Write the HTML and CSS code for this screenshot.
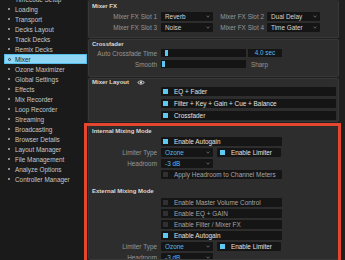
FILE: index.html
```html
<!DOCTYPE html>
<html lang="en">
<head>
    <meta charset="UTF-8">
    <title>Preferences - Mixer</title>
    <link rel="stylesheet" href="styles.css">
</head>
<body>
    <div class="app">
        <div class="sidebar">
            <ul class="nav">
                <li><span class="dot"></span>Timecode Setup</li>
                <li><span class="dot"></span>Loading</li>
                <li><span class="dot"></span>Transport</li>
                <li><span class="dot"></span>Decks Layout</li>
                <li><span class="dot"></span>Track Decks</li>
                <li><span class="dot"></span>Remix Decks</li>
                <li class="active"><span class="dot"></span>Mixer</li>
                <li><span class="dot"></span>Ozone Maximizer</li>
                <li><span class="dot"></span>Global Settings</li>
                <li><span class="dot"></span>Effects</li>
                <li><span class="dot"></span>Mix Recorder</li>
                <li><span class="dot"></span>Loop Recorder</li>
                <li><span class="dot"></span>Streaming</li>
                <li><span class="dot"></span>Broadcasting</li>
                <li><span class="dot"></span>Browser Details</li>
                <li><span class="dot"></span>Layout Manager</li>
                <li><span class="dot"></span>File Management</li>
                <li><span class="dot"></span>Analyze Options</li>
                <li><span class="dot"></span>Controller Manager</li>
            </ul>
        </div>

        <div class="main">
            <div class="panel panel-fx">
                <div class="head">Mixer FX</div>
                <div class="row">
                    <span class="lbl">Mixer FX Slot 1</span>
                    <div class="select">Reverb<svg class="chev" viewBox="0 0 4 3"><polyline points="0.5,0.8 2,2.2 3.5,0.8"/></svg></div>
                    <span class="lbl lbl-2">Mixer FX Slot 2</span>
                    <div class="select select-2">Dual Delay<svg class="chev" viewBox="0 0 4 3"><polyline points="0.5,0.8 2,2.2 3.5,0.8"/></svg></div>
                </div>
                <div class="row">
                    <span class="lbl">Mixer FX Slot 3</span>
                    <div class="select">Noise<svg class="chev" viewBox="0 0 4 3"><polyline points="0.5,0.8 2,2.2 3.5,0.8"/></svg></div>
                    <span class="lbl lbl-2">Mixer FX Slot 4</span>
                    <div class="select select-2">Time Gater<svg class="chev" viewBox="0 0 4 3"><polyline points="0.5,0.8 2,2.2 3.5,0.8"/></svg></div>
                </div>
            </div>

            <div class="panel panel-xf">
                <div class="head">Crossfader</div>
                <div class="row row-a">
                    <span class="lbl">Auto Crossfade Time</span>
                    <div class="track"><span class="handle" style="margin-left: 4px"></span></div>
                    <div class="value">4.0 sec</div>
                </div>
                <div class="row row-b">
                    <span class="lbl">Smooth</span>
                    <div class="track"><span class="handle" style="margin-left: 1px"></span></div>
                    <span class="after">Sharp</span>
                </div>
            </div>

            <div class="panel panel-layout">
                <div class="head">Mixer Layout
                    <svg class="eye" viewBox="0 0 9 6"><path d="M0.5 3 Q4.5 -1 8.5 3 Q4.5 7 0.5 3 Z"/><circle cx="4.5" cy="3" r="1.3"/></svg>
                </div>
                <div class="row row-12">
                    <span class="lbl"></span>
                    <div class="field wide"><span class="box on"></span>EQ + Fader</div>
                </div>
                <div class="row row-12">
                    <span class="lbl"></span>
                    <div class="field wide"><span class="box on"></span>Filter + Key + Gain + Cue + Balance</div>
                </div>
                <div class="row row-12">
                    <span class="lbl"></span>
                    <div class="field wide"><span class="box on"></span>Crossfader</div>
                </div>
            </div>

            <div class="panel panel-mode">
                <div class="head">Internal Mixing Mode</div>
                <div class="row">
                    <span class="lbl"></span>
                    <div class="field"><span class="box on"></span>Enable Autogain</div>
                </div>
                <div class="row">
                    <span class="lbl">Limiter Type</span>
                    <div class="select blue">Ozone<svg class="chev" viewBox="0 0 4 3"><polyline points="0.5,0.8 2,2.2 3.5,0.8"/></svg></div>
                    <div class="field small"><span class="box on"></span>Enable Limiter</div>
                </div>
                <div class="row">
                    <span class="lbl">Headroom</span>
                    <div class="select blue">-3 dB<svg class="chev" viewBox="0 0 4 3"><polyline points="0.5,0.8 2,2.2 3.5,0.8"/></svg></div>
                </div>
                <div class="row">
                    <span class="lbl"></span>
                    <div class="field dim"><span class="box"></span>Apply Headroom to Channel Meters</div>
                </div>

                <div class="head head-ext">External Mixing Mode</div>
                <div class="row">
                    <span class="lbl"></span>
                    <div class="field dim"><span class="box"></span>Enable Master Volume Control</div>
                </div>
                <div class="row">
                    <span class="lbl"></span>
                    <div class="field dim"><span class="box"></span>Enable EQ + GAIN</div>
                </div>
                <div class="row">
                    <span class="lbl"></span>
                    <div class="field dim"><span class="box"></span>Enable Filter / Mixer FX</div>
                </div>
                <div class="row">
                    <span class="lbl"></span>
                    <div class="field"><span class="box on"></span>Enable Autogain</div>
                </div>
                <div class="row">
                    <span class="lbl">Limiter Type</span>
                    <div class="select blue">Ozone<svg class="chev" viewBox="0 0 4 3"><polyline points="0.5,0.8 2,2.2 3.5,0.8"/></svg></div>
                    <div class="field small"><span class="box on"></span>Enable Limiter</div>
                </div>
                <div class="row">
                    <span class="lbl">Headroom</span>
                    <div class="select blue">-3 dB<svg class="chev" viewBox="0 0 4 3"><polyline points="0.5,0.8 2,2.2 3.5,0.8"/></svg></div>
                </div>
            </div>
        </div>

        <div class="callout"></div>
    </div>
</body>
</html>
```

FILE: styles.css
```css
* {
    margin: 0;
    padding: 0;
    box-sizing: border-box;
}

body {
    font-family: "Liberation Sans", Arial, sans-serif;
    font-size: 6.4px;
    background-color: #1e1e1e;
    color: #c8c8c8;
    width: 345px;
    height: 260px;
    overflow: hidden;
}

.app {
    position: relative;
    display: flex;
    height: 260px;
    overflow: hidden;
}

/* sidebar */
.sidebar {
    width: 87px;
    flex: none;
    background-color: #1a1a1a;
    overflow: hidden;
}

.nav {
    list-style: none;
    margin-top: -6px;
}

.nav li {
    display: flex;
    align-items: center;
    gap: 5px;
    height: 10px;
    padding-left: 8px;
    color: #c6c6c6;
    white-space: nowrap;
}

.nav .dot {
    width: 2px;
    height: 2px;
    background-color: #8a8a8a;
    flex: none;
}

.nav li.active {
    margin-left: 4px;
    padding-left: 4px;
    gap: 4px;
    background-color: #8ed6f4;
    box-shadow: inset 0 0 0 1px #55bde9;
    color: #152028;
}

.nav li.active .dot {
    width: 3px;
    height: 3px;
    border-radius: 50%;
    background: none;
    border: 0.8px solid #2a3a44;
}

/* main */
.main {
    flex: 1;
    padding: 0 6px 0 1px;
    background-color: #202020;
    overflow: hidden;
}

.panel {
    background-color: #2d2d2d;
    border: 1px solid #383838;
    border-radius: 2px;
    margin-bottom: 1px;
}

.head {
    display: flex;
    align-items: center;
    gap: 8px;
    height: 10px;
    padding-left: 3px;
    font-weight: bold;
    font-size: 6px;
    color: #dadada;
}

.panel-fx {
    border-top-color: #2d2d2d;
    padding-bottom: 4px;
}

.panel-xf .head {
    height: 8px;
}

.panel-xf {
    padding-bottom: 6px;
}

.panel-layout .head {
    height: 6px;
}

.panel-mode {
    padding-top: 1px;
    height: 137px;
    overflow: hidden;
}

.panel-mode .head {
    height: 11px;
}

.panel-mode .head-ext {
    margin-top: 5px;
    height: 12px;
}

.eye {
    width: 8px;
    height: 5px;
}

.eye path {
    fill: none;
    stroke: #e6e6e6;
    stroke-width: 1;
}

.eye circle {
    fill: #e6e6e6;
}

.row {
    display: flex;
    align-items: center;
    height: 11px;
}

.row-a {
    height: 10px;
}

.row-b {
    height: 12px;
}

.row-12 {
    height: 12px;
}

.lbl {
    width: 68px;
    margin-right: 4px;
    text-align: right;
    color: #979797;
    white-space: nowrap;
    flex: none;
}

.lbl-2 {
    width: 51px;
    margin-right: 3px;
}

.select {
    display: flex;
    align-items: center;
    justify-content: space-between;
    width: 52px;
    height: 9px;
    padding: 0 3px 0 4px;
    background-color: #151515;
    border-radius: 1px;
    color: #d4d4d4;
    flex: none;
}

.select-2 {
    width: 53px;
}

.select.blue {
    color: #55bbe8;
}

.chev {
    width: 4px;
    height: 3px;
}

.chev polyline {
    fill: none;
    stroke: #7a7a7a;
    stroke-width: 0.8;
}

.track {
    display: flex;
    align-items: center;
    width: 85px;
    height: 8px;
    background-color: #141414;
    flex: none;
}

.handle {
    width: 3px;
    height: 6px;
    background-color: #5cc8f2;
}

.value {
    width: 34px;
    height: 8px;
    margin-left: 2px;
    background-color: #151515;
    color: #55bbe8;
    text-align: center;
    line-height: 8px;
}

.after {
    margin-left: 5px;
    color: #979797;
}

.field {
    display: flex;
    align-items: center;
    width: 121px;
    height: 9px;
    padding-left: 2px;
    background-color: #151515;
    border-radius: 1px;
    color: #e2e2e2;
    white-space: nowrap;
    flex: none;
}

.field.wide {
    width: 175px;
}

.field.small {
    width: 64px;
    margin-left: 4px;
    padding-left: 3px;
}

.field.dim {
    color: #a6a6a6;
}

.box {
    width: 5px;
    height: 5px;
    margin-right: 6px;
    background-color: #303030;
    flex: none;
}

.box.on {
    background-color: #5ccaf2;
}

/* red highlight frame drawn over the mixing mode area */
.callout {
    position: absolute;
    left: 84px;
    top: 123px;
    width: 257px;
    height: 160px;
    border: 3px solid #e4472d;
}
```
